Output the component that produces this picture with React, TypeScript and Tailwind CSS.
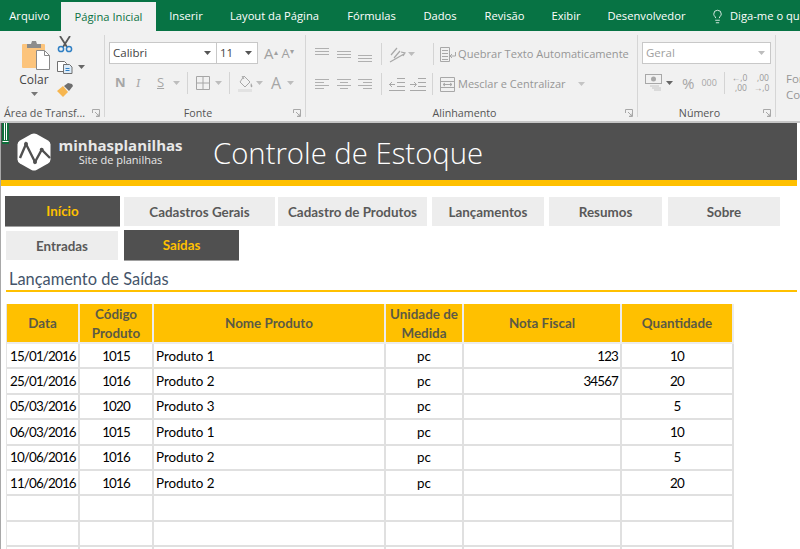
import React from 'react';
import { Lightbulb } from 'lucide-react';

const UI = "font-['Open_Sans',sans-serif]";
const CELL = "font-['Lato',sans-serif]";

const Caret = ({ className = '' }: { className?: string }) => (
    <svg width="7" height="4" viewBox="0 0 7 4" className={`shrink-0 ${className}`}>
        <path d="M0 0h7L3.5 4z" fill="currentColor" />
    </svg>
);

const Launcher = () => (
    <svg width="8" height="8" viewBox="0 0 8 8" className="shrink-0 text-[#a8a8a8]">
        <path d="M.5 4V.5H7.5V7.5H4M3 3l4 4M7 4.500V7H4.500" fill="none" stroke="currentColor" />
    </svg>
);

const Lines = ({ rows, className = '' }: { rows: [number, number, number][]; className?: string }) => (
    <svg width="15" height="15" viewBox="0 0 15 15" className={`shrink-0 text-[#b0b0b0] ${className}`}>
        {rows.map(([y, a, b], i) => (
            <rect key={i} x={a} y={y} width={b - a} height="1" fill="currentColor" />
        ))}
    </svg>
);

const PasteIcon = () => (
    <svg width="30" height="30" viewBox="0 0 30 30" className="shrink-0">
        <rect x="1" y="4" width="23" height="24" rx="1" fill="#fcc47c" />
        <path d="M6 4h4l1-3h4l1 3h4v4H6z" fill="#8c8c8c" />
        <path d="M15.500 10.500h8l5 5v14h-13z" fill="#fff" stroke="#8a8a8a" />
        <path d="M23.500 10.500v5h5" fill="none" stroke="#8a8a8a" />
    </svg>
);

const ScissorsIcon = () => (
    <svg width="16" height="17" viewBox="0 0 16 17" className="shrink-0">
        <path d="M3 0l7 11M13 0L6 11" stroke="#595959" strokeWidth="1.800" />
        <circle cx="4" cy="13" r="2.600" fill="none" stroke="#2f7fc4" strokeWidth="1.500" />
        <circle cx="12" cy="13" r="2.600" fill="none" stroke="#2f7fc4" strokeWidth="1.500" />
    </svg>
);

const CopyIcon = () => (
    <svg width="16" height="14" viewBox="0 0 16 14" className="shrink-0">
        <path d="M.5 1.500h7l2 2v8H.5z" fill="#fff" stroke="#707070" />
        <path d="M6.500 4.500h6l2.500 2.500v6.500H6.500z" fill="#dcebf8" stroke="#707070" />
        <path d="M8.500 8.500h4M8.500 10.500h4" stroke="#2f7fc4" />
    </svg>
);

const BrushIcon = () => (
    <svg width="17" height="15" viewBox="0 0 17 15" className="shrink-0">
        <path d="M0 9l6-5 5 6-5 5z" fill="#f7b64f" />
        <path d="M7 4l4-3 4 1 1 2-4 5z" fill="#6e6e6e" />
    </svg>
);

const BordersIcon = () => (
    <svg width="14" height="14" viewBox="0 0 14 14" className="shrink-0 text-[#a6a6a6]">
        <path d="M.5.500h13v13H.5zM7 .5v13M.5 7h13" fill="none" stroke="currentColor" />
    </svg>
);

const FillIcon = () => (
    <svg width="16" height="17" viewBox="0 0 16 17" className="shrink-0 text-[#a6a6a6]">
        <path d="M6 1l6 6-5 5-5-5zM4 1l2 3" fill="none" stroke="currentColor" />
        <path d="M13 8c1 2 2 3 1 4s-2-1-1-4z" fill="currentColor" />
        <rect y="14" width="14" height="3" fill="#e2e2e2" />
    </svg>
);

const OrientIcon = () => (
    <svg width="17" height="17" viewBox="0 0 17 17" className="shrink-0 text-[#a8a8a8]">
        <path d="M2 9l6-7M5 12l6-7M1 16l14-8M12 6l4 1-2 3" fill="none" stroke="currentColor" strokeWidth="1.200" />
    </svg>
);

const WrapIcon = () => (
    <svg width="17" height="15" viewBox="0 0 17 15" className="shrink-0 text-[#a8a8a8]">
        <path d="M.5.500h9v14h-9zM2 3.500h6M2 6.500h6M2 9.500h6M2 12.500h6M15.500 5v4H10M12 7l-2 2 2 2" fill="none" stroke="currentColor" />
    </svg>
);

const MergeIcon = () => (
    <svg width="15" height="15" viewBox="0 0 15 15" className="shrink-0 text-[#a8a8a8]">
        <path d="M.5.500h14v14H.5zM.5 4.500h14M.5 10.500h14M3 7.500h9M3 7.500l2-1.500M3 7.500l2 1.500M12 7.500l-2-1.500M12 7.500l-2 1.500" fill="none" stroke="currentColor" />
    </svg>
);

const IndentIcon = ({ flip = false }: { flip?: boolean }) => (
    <svg width="16" height="15" viewBox="0 0 16 15" className="shrink-0 text-[#a8a8a8]">
        <path d={flip ? 'M0 7.500h6M4 5l2.500 2.500L4 10M8 1.500h8M8 5.500h8M8 9.500h8M0 13.500h16' : 'M0 7.500h6M3 5L.5 7.500 3 10M8 1.500h8M8 5.500h8M8 9.500h8M0 13.500h16'} fill="none" stroke="currentColor" />
    </svg>
);

const MoneyIcon = () => (
    <svg width="17" height="18" viewBox="0 0 17 18" className="shrink-0 text-[#a8a8a8]">
        <rect x=".5" y=".5" width="16" height="9" fill="none" stroke="currentColor" />
        <circle cx="8.500" cy="5" r="2.500" fill="currentColor" />
        <path d="M5 12h9M7 14h9M9 16h7" stroke="#c4c4c4" />
    </svg>
);

const Sep = ({ className = '' }: { className?: string }) => <div className={`w-px h-[22px] bg-[#d4d4d4] shrink-0 ${className}`} />;

const Group = ({ width, label, labelClass = 'justify-center pr-[14px]', children }: { width: string; label: string; labelClass?: string; children: React.ReactNode }) => (
    <div className={`${width} shrink-0 relative flex flex-col h-full border-r border-[#d6d6d6]`}>
        <div className="flex-1 min-h-0">{children}</div>
        <div className={`h-[16px] -mb-[4px] flex items-center text-[10.700px] text-[#555555] ${labelClass}`}>
            {label}
        </div>
        <div className="absolute right-[4px] bottom-0">
            <Launcher />
        </div>
    </div>
);

const tabs = [
    { label: 'Arquivo', w: 'w-[61px] pr-[2px]' },
    { label: 'Página Inicial', w: 'w-[95px]', active: true },
    { label: 'Inserir', w: 'w-[60px]' },
    { label: 'Layout da Página', w: 'w-[117px]' },
    { label: 'Fórmulas', w: 'w-[77px]' },
    { label: 'Dados', w: 'w-[60px]' },
    { label: 'Revisão', w: 'w-[69px]' },
    { label: 'Exibir', w: 'w-[54px]' },
    { label: 'Desenvolvedor', w: 'w-[107px]' },
];

const Tabs = () => (
    <div className={`${UI} h-[31px] bg-[#077344] flex items-end text-[11.200px] text-white overflow-hidden`}>
        {tabs.map(t => (
            <div
                key={t.label}
                className={`${t.w} shrink-0 flex items-center justify-center ${t.active ? 'h-[29px] bg-[#f1f1f1] text-[#0b7243] font-medium pt-[1px]' : 'h-[31px] pt-[2px]'}`}
            >
                {t.label}
            </div>
        ))}
        <div className="h-[31px] pt-[2px] flex items-center gap-[5px] ml-[10px] whitespace-nowrap">
            <Lightbulb size={15} strokeWidth={1.300} />
            <span>Diga-me o que deseja fazer</span>
        </div>
    </div>
);

const Ribbon = () => (
    <div className={`${UI} h-[92px] bg-[#f1f1f1] border-b-2 border-[#c6c6c6] flex py-[4px] overflow-hidden`}>
        <Group width="w-[105px]" label="Área de Transf..." labelClass="pl-[4px]">
            <div className="flex h-full">
                <div className="w-[57px] flex flex-col items-center pl-[11px] pt-[5px] text-[#444444]">
                    <div className="ml-[4px]"><PasteIcon /></div>
                    <span className="text-[12px] mt-[1px] leading-[17px]">Colar</span>
                    <Caret className="mt-[4px] text-[#777777]" />
                </div>
                <div className="flex flex-col items-start pt-[1px]">
                    <ScissorsIcon />
                    <div className="flex items-center gap-[5px] mt-[7px] text-[#666666]">
                        <CopyIcon />
                        <Caret />
                    </div>
                    <div className="mt-[8px]">
                        <BrushIcon />
                    </div>
                </div>
            </div>
        </Group>
        <Group width="w-[201px]" label="Fonte">
            <div className="flex items-center h-[22px] mt-[7px] ml-[4px]">
                <div className="w-[108px] h-full bg-white border border-[#c8c8c8] flex items-center justify-between px-[3px] pr-[5px] text-[11.500px] text-[#444444]">
                    <span>Calibri</span>
                    <Caret className="text-[#555555]" />
                </div>
                <div className="w-[41px] h-full bg-white border border-l-0 border-[#c8c8c8] flex items-center justify-between px-[3px] pr-[5px] text-[11.500px] text-[#444444]">
                    <span>11</span>
                    <Caret className="text-[#555555]" />
                </div>
                <span className="ml-[6px] text-[15px] text-[#a0a0a0] leading-none">A<sup className="text-[8px]">▴</sup></span>
                <span className="ml-[4px] text-[13px] text-[#a0a0a0] leading-none">A<sup className="text-[8px]">▾</sup></span>
            </div>
            <div className="flex items-center h-[24px] mt-[7px] text-[#a6a6a6]">
                <span className="ml-[10px] w-[21px] text-[13px] font-bold">N</span>
                <span className="w-[21px] text-[13px] italic font-serif">I</span>
                <span className="w-[16px] text-[13px] underline">S</span>
                <Caret className="text-[#bdbdbd]" />
                <Sep className="ml-[7px]" />
                <div className="ml-[8px]"><BordersIcon /></div>
                <Caret className="ml-[5px] text-[#bdbdbd]" />
                <Sep className="ml-[7px]" />
                <div className="ml-[8px]"><FillIcon /></div>
                <Caret className="ml-[2px] text-[#bdbdbd]" />
                <span className="ml-[8px] text-[16px] font-medium leading-none">A</span>
                <Caret className="ml-[6px] text-[#bdbdbd]" />
            </div>
        </Group>
        <Group width="w-[332px]" label="Alinhamento">
            <div className="flex items-center h-[26px] mt-[6px]">
                <Lines rows={[[3, 0, 14], [6, 0, 14], [9, 0, 14]]} className="ml-[9px] -mt-[3px]" />
                <Lines rows={[[4, 0, 14], [7, 0, 14], [10, 0, 14]]} className="ml-[7px]" />
                <Lines rows={[[7, 0, 14], [10, 0, 14], [13, 0, 14]]} className="ml-[6px] mt-[3px]" />
                <Sep className="ml-[8px]" />
                <div className="ml-[7px]"><OrientIcon /></div>
                <Caret className="ml-[2px] text-[#bdbdbd]" />
                <Sep className="ml-[18px]" />
                <div className="ml-[6px]"><WrapIcon /></div>
                <span className="ml-[1px] text-[11.100px] text-[#969696] whitespace-nowrap">Quebrar Texto Automaticamente</span>
            </div>
            <div className="flex items-center h-[26px] mt-[4px]">
                <Lines rows={[[2, 0, 14], [5, 0, 9], [8, 0, 14], [11, 0, 9]]} className="ml-[9px]" />
                <Lines rows={[[2, 0, 14], [5, 3, 11], [8, 0, 14], [11, 3, 11]]} className="ml-[7px]" />
                <Lines rows={[[2, 0, 14], [5, 5, 14], [8, 0, 14], [11, 5, 14]]} className="ml-[6px]" />
                <Sep className="ml-[8px]" />
                <div className="ml-[7px]"><IndentIcon /></div>
                <div className="ml-[5px]"><IndentIcon flip /></div>
                <Sep className="ml-[6px]" />
                <div className="ml-[7px]"><MergeIcon /></div>
                <span className="ml-[3px] text-[11px] text-[#969696] whitespace-nowrap">Mesclar e Centralizar</span>
                <Caret className="ml-[12px] text-[#c4c4c4]" />
            </div>
        </Group>
        <Group width="w-[138px]" label="Número">
            <div className="h-[22px] mt-[7px] mx-[4px] bg-white border border-[#c8c8c8] flex items-center justify-between px-[3px] pr-[5px] text-[11.500px] text-[#a0a0a0]">
                <span>Geral</span>
                <Caret className="text-[#bdbdbd]" />
            </div>
            <div className="flex items-center h-[24px] mt-[7px] text-[#a6a6a6]">
                <div className="ml-[7px]"><MoneyIcon /></div>
                <Caret className="ml-[4px] text-[#666666]" />
                <span className="ml-[9px] text-[15px] leading-none">%</span>
                <span className="ml-[7px] text-[9px]">000</span>
                <Sep className="ml-[7px]" />
                <div className="ml-[7px] w-[15px] text-[8.500px] leading-[10px] text-right text-[#9a9a9a]">←,0<br />,00</div>
                <div className="ml-[7px] w-[15px] text-[8.500px] leading-[10px] text-right text-[#9a9a9a]">,00<br />→,0</div>
            </div>
        </Group>
        <div className="flex-1 pl-[10px] pt-[36px] text-[11.500px] leading-[16px] text-[#969696] whitespace-nowrap">
            <div>Formatação</div>
            <div>Condicional</div>
        </div>
    </div>
);

const NavButton = ({ label, width, active = false }: { label: string; width: string; active?: boolean }) => (
    <div
        className={`${width} shrink-0 flex items-center justify-center pt-px font-bold text-[13.400px] ${
            active ? 'h-[31px] -my-px bg-[#505050] text-[#ffc000] border-b border-[#a0a0a0]' : 'h-[29px] bg-[#ededed] text-[#595959]'
        }`}
    >
        {label}
    </div>
);

const columns = 'grid grid-cols-[73px_74px_232px_78px_158px_112px]';

const rows = [
    ['15/01/2016', '1015', 'Produto 1', 'pc', '123', '10'],
    ['25/01/2016', '1016', 'Produto 2', 'pc', '34567', '20'],
    ['05/03/2016', '1020', 'Produto 3', 'pc', '', '5'],
    ['06/03/2016', '1015', 'Produto 1', 'pc', '', '10'],
    ['10/06/2016', '1016', 'Produto 2', 'pc', '', '5'],
    ['11/06/2016', '1016', 'Produto 2', 'pc', '', '20'],
    ['', '', '', '', '', ''],
    ['', '', '', '', '', ''],
    ['', '', '', '', '', ''],
];

const headers = ['Data', 'Código Produto', 'Nome Produto', 'Unidade de Medida', 'Nota Fiscal', 'Quantidade'];

const cellAlign = [
    'pl-[3px] tracking-[-.85px]',
    'justify-center tracking-[-.85px]',
    'pl-[2px]',
    'justify-center',
    'justify-end pr-[2px] tracking-[-.85px]',
    'justify-center tracking-[-.85px]',
];

const Sheet = () => (
    <div className={`${CELL} relative flex-1 min-h-0 bg-white border-l border-[#a8a8a8] pr-[3px] overflow-hidden`}>
        <svg width="7" height="21" viewBox="0 0 7 21" className="absolute left-[1px] top-0">
            <rect width="7" height="21" fill="#0e6e3a" />
            <path d="M2.500 0v17M4.500 0v17M.5 18.500h6" fill="none" stroke="#fff" />
        </svg>
        <div className="h-[57px] bg-[#505050] flex items-center text-white">
            <svg width="34" height="38" viewBox="0 0 34 38" className="ml-[16px] shrink-0">
                <path d="M14.500 1L3 7.500Q.5 9 .5 11.500v15q0 2.500 2.500 4L14.500 37q2.500 1 5 0L31 30.500q2.500-1.500 2.500-4v-15Q33.500 9 31 7.500L19.500 1q-2.500-1-5 0z" fill="#fff" />
                <path d="M3 25L9 11l9 18 6.700-12.300L33 25" fill="none" stroke="#505050" strokeWidth="2.400" />
                <circle cx="9" cy="11" r="2" fill="#505050" />
                <circle cx="18" cy="29" r="2" fill="#505050" />
                <circle cx="24.700" cy="16.700" r="2" fill="#505050" />
            </svg>
            <div className="ml-[7px] w-[125px] flex flex-col items-center font-['Open_Sans',sans-serif] text-[#e8e8e8] shrink-0">
                <span className="text-[15px] font-bold leading-[16px] whitespace-nowrap">minhasplanilhas</span>
                <span className="text-[11px] font-medium leading-[13px] whitespace-nowrap">Site de planilhas</span>
            </div>
            <h1 className="ml-[30px] mt-[4px] font-['Open_Sans',sans-serif] font-light text-[29.300px] leading-none whitespace-nowrap">Controle de Estoque</h1>
        </div>
        <div className="h-[6px] bg-[#ffc000]" />
        <div className="pl-[4px] pt-[11px] flex flex-col gap-[5px]">
            <div className="flex items-center h-[29px]">
                <NavButton label="Início" width="w-[115px]" active />
                <div className="ml-[4px]"><NavButton label="Cadastros Gerais" width="w-[151px]" /></div>
                <div className="ml-[3px]"><NavButton label="Cadastro de Produtos" width="w-[149px]" /></div>
                <div className="ml-[5px]"><NavButton label="Lançamentos" width="w-[112px]" /></div>
                <div className="ml-[5px]"><NavButton label="Resumos" width="w-[113px]" /></div>
                <div className="ml-[6px]"><NavButton label="Sobre" width="w-[112px]" /></div>
            </div>
            <div className="flex items-center h-[29px]">
                <div className="ml-[1px]"><NavButton label="Entradas" width="w-[112px]" /></div>
                <div className="ml-[6px]"><NavButton label="Saídas" width="w-[115px]" active /></div>
            </div>
        </div>
        <div className="mt-[9px] ml-[5px] h-[23px] border-b-2 border-[#ffc000] pl-[3px] text-[16.400px] leading-[20px] text-[#44546a]">
            Lançamento de Saídas
        </div>
        <div className={`${columns} ml-[5px] mt-[12px] w-[728px] text-[13.400px] border-l border-[#e4e4e4]`}>
            {headers.map(h => (
                <div
                    key={h}
                    className="h-[40px] bg-[#ffc000] border-r-2 border-b-2 border-[#ececec] flex items-center justify-center text-center font-bold text-[#5c5a44] leading-[19px] px-[1px] pt-[1px]"
                >
                    {h}
                </div>
            ))}
            {rows.map((r, i) =>
                r.map((c, j) => (
                    <div
                        key={`${i}-${j}`}
                        className={`h-[25.400px] bg-white border-r-2 border-b-2 border-[#e0e0e0] flex items-center text-black ${cellAlign[j]}`}
                    >
                        {c}
                    </div>
                ))
            )}
        </div>
    </div>
);

export default function App() {
    return (
        <div className="w-[800px] h-[549px] flex flex-col overflow-hidden bg-white">
            <Tabs />
            <Ribbon />
            <Sheet />
        </div>
    );
}
